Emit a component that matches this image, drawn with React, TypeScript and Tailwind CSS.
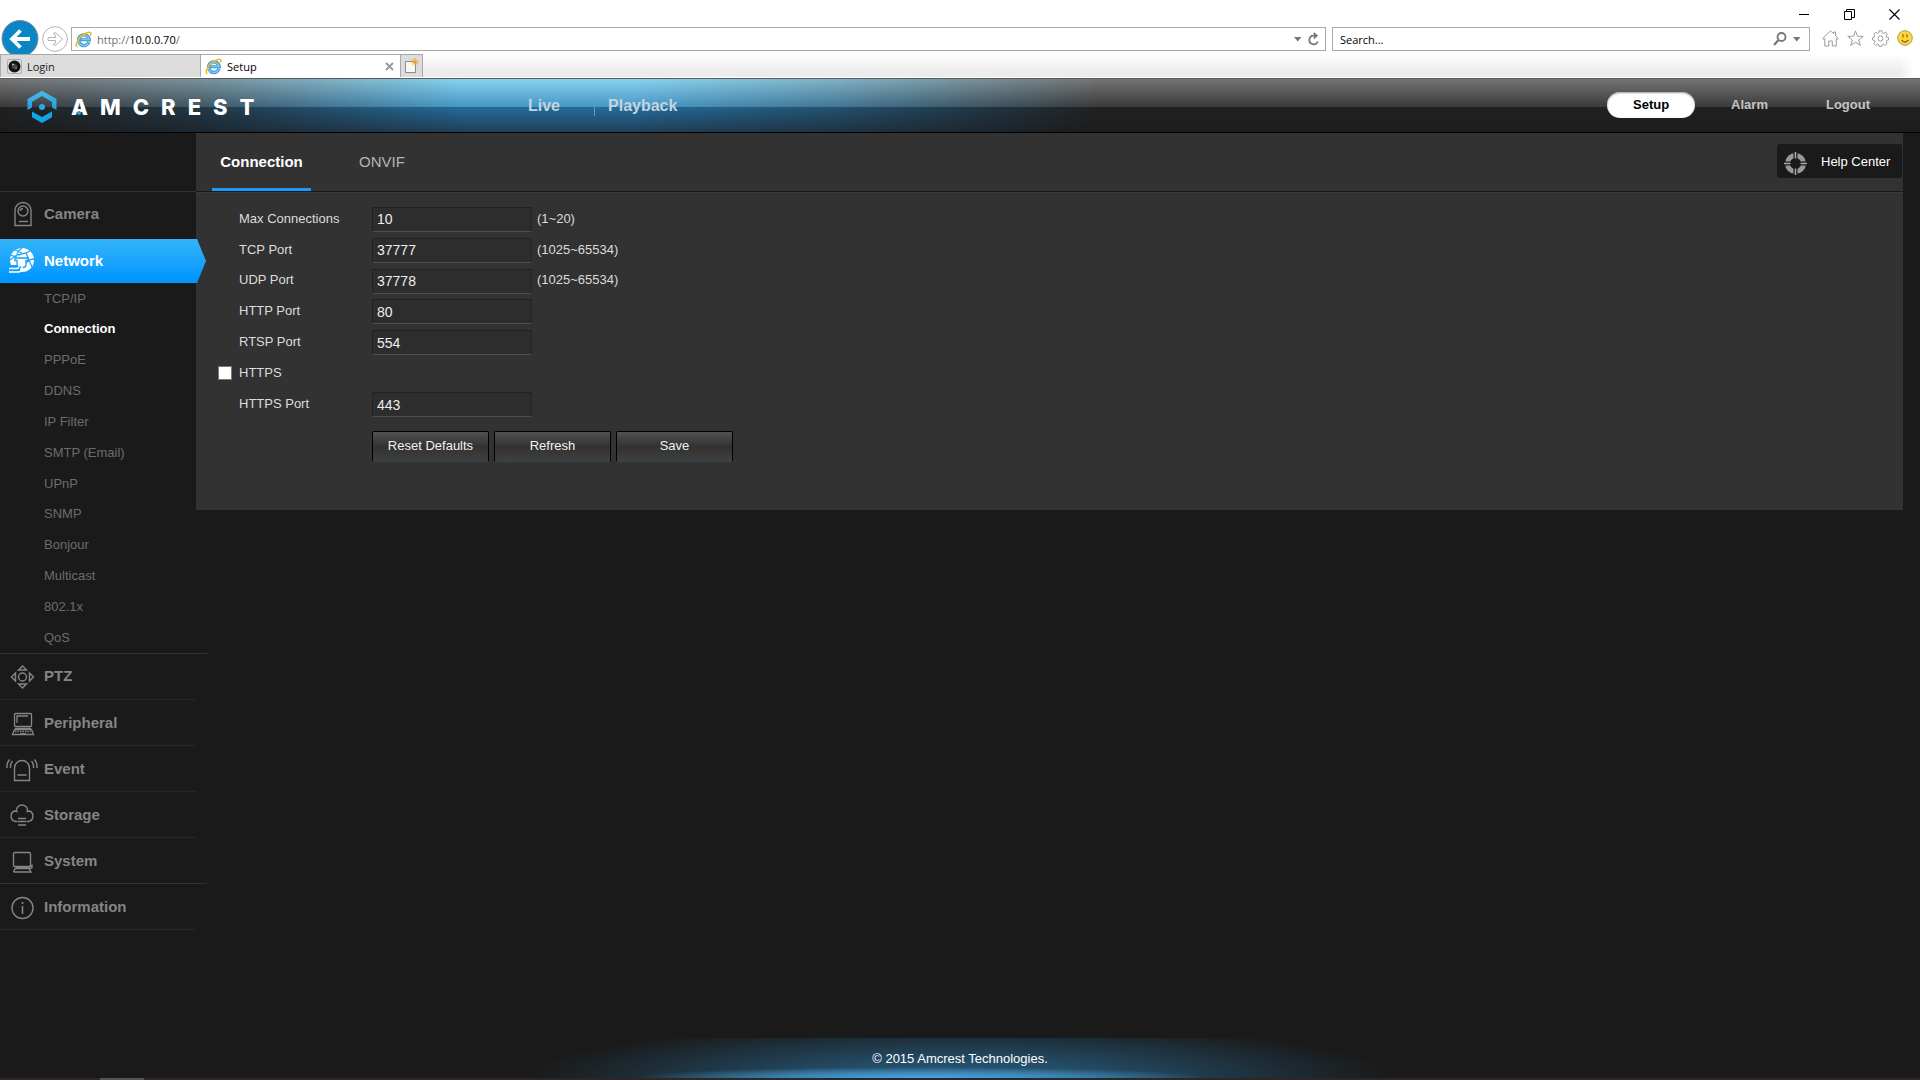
import React from "react";

const line = { fill: "none", stroke: "currentColor" } as const;

function IELogo() {
  return (
    <svg width="17" height="17" viewBox="0 0 17 17" className="shrink-0">
      <path d="M14 10.800A5.300 5.300 0 1 1 14.200 8.600H5.500" fill="none" stroke="#3a93d4" strokeWidth="3.400" />
      <path d="M13.800 11A5.300 5.300 0 1 1 14 8.400H6" fill="none" stroke="#7cc8f2" strokeWidth="1.600" />
      <path d="M2.200 15.800C-.8 13.500 4.500 5 11.500 2 15.500.4 16.800 1.600 15.300 4.600" fill="none" stroke="#f2b91d" strokeWidth="1.600" />
    </svg>
  );
}

function CameraIcon() {
  return (
    <svg width="32" height="30" viewBox="0 0 32 30" {...line} strokeWidth="1.400">
      <path d="M9 26.500V11.500a8 8 0 0 1 16 0v15Z" />
      <circle cx="17" cy="12" r="5" />
      <path d="M14.500 12a2.500 2.500 0 0 1 2.500-2.500M13 22.500h9" />
    </svg>
  );
}

function NetworkIcon() {
  return (
    <svg width="32" height="30" viewBox="0 0 32 30" fill="none" stroke="#fff">
      <circle cx="16" cy="14" r="12" fill="#fff" stroke="none" />
      <path d="M5 9q6 3 6 0t5-7M12 9l8-2 6-3M20 7l3 7 5-1M23 14l-3 3M23 14l3 7M4 14l7-5M9 4l7 3" stroke="#1ea7fb" strokeWidth="1.300" />
      <path d="M2 19h12v8H2Z" fill="#12a2fd" stroke="none" />
      <path d="M9 12h13v2.500h-2v4q0 3-3 3h-3q-3 0-3-3v-4H9Z" fill="#fff" stroke="#12a2fd" strokeWidth="1.300" />
      <path d="M16 21v1.500q0 3.500-4 3.500H3M3 22.500h8q1.500 0 1.500-1.500" strokeWidth="1.600" />
    </svg>
  );
}

function PtzIcon() {
  return (
    <svg width="32" height="30" viewBox="0 0 32 30" {...line} strokeWidth="1.400">
      <circle cx="16.500" cy="15" r="4" />
      <path d="M12.500 8 16.500 4l4 4ZM12.500 22l4 4 4-4ZM9.500 11v8l-4-4ZM23.500 11v8l4-4Z" />
    </svg>
  );
}

function PeripheralIcon() {
  return (
    <svg width="32" height="30" viewBox="0 0 32 30" {...line} strokeWidth="1.300">
      <rect x="8.500" y="4.500" width="17" height="13" rx="1" />
      <path d="M11 14V7h11M9 19.500h16M6.500 25.500l2-5h17l2 5Z" />
      <path d="M9 22.500h16" strokeDasharray="1.500 1" />
      <path d="M14 25h6" strokeWidth="1.800" />
    </svg>
  );
}

function EventIcon() {
  return (
    <svg width="32" height="30" viewBox="0 0 32 30" {...line} strokeWidth="1.400">
      <path d="M8.500 25.500V13a7.500 7.500 0 0 1 15 0v12.500ZM11.500 20h9M6.500 6q-2.500 3-2 7M3.500 4.500Q.5 8 1 13M25.500 6q2.500 3 2 7M28.500 4.500q3 3.500 2.500 8.500" />
    </svg>
  );
}

function StorageIcon() {
  return (
    <svg width="32" height="30" viewBox="0 0 32 30" {...line} strokeWidth="1.400">
      <path d="M11 20.500H9.500a5.500 5.500 0 0 1-1-10.500q2 0 3 1M10.500 9.500a5.500 5.500 0 0 1 11 0M20.500 11q1-1 3-1a5.500 5.500 0 0 1-1 10.500H21M12 17.500h8M11.500 20.500h9M12 24h8" />
    </svg>
  );
}

function SystemIcon() {
  return (
    <svg width="32" height="30" viewBox="0 0 32 30" {...line} strokeWidth="1.400">
      <rect x="7.500" y="5.500" width="17" height="14" rx="1.500" />
      <path d="M10 20.500h12l4-2v2l-2.500 1.500M7.500 25l2-4.500M7.500 25h17.500l-2-3.500H9" />
    </svg>
  );
}

function InfoIcon() {
  return (
    <svg width="32" height="30" viewBox="0 0 32 30" {...line} strokeWidth="1.400">
      <circle cx="16.500" cy="15" r="10.500" />
      <path d="M16.500 13v8M16.500 9v2" strokeWidth="1.600" />
    </svg>
  );
}

function BrowserChrome() {
  return (
    <header className="bg-white text-[11px] text-black [font-family:'Open_Sans',sans-serif]">
      <div className="flex h-[27px] items-start justify-end pt-[5px]">
        <button aria-label="Minimize" className="flex h-[18px] w-[46px] items-center justify-center">
          <svg width="10" height="10" viewBox="0 0 10 10"><path d="M0 5.500h10" stroke="#000" /></svg>
        </button>
        <button aria-label="Restore" className="flex h-[18px] w-[45px] items-center justify-center">
          <svg width="11" height="11" viewBox="0 0 11 11" fill="none" stroke="#000"><path d="M.5 2.500h7v8h-7ZM2.500 2.500v-2h8v8h-3" /></svg>
        </button>
        <button aria-label="Close" className="mr-[3px] flex h-[18px] w-[45px] items-center justify-center">
          <svg width="11" height="11" viewBox="0 0 11 11" stroke="#000" strokeWidth="1.100"><path d="m.5.5 10 10M10.500.5l-10 10" /></svg>
        </button>
      </div>

      <div className="flex h-[27px] items-start pr-[7px]">
        <button aria-label="Back" className="-mt-[7px] ml-px shrink-0">
          <svg width="38" height="34" viewBox="0 0 38 34" className="block">
            <circle cx="19" cy="18.500" r="18" fill="#0a86c6" stroke="#7d8a92" />
            <path d="M29 19H11.500M19.500 10.500 11 19l8.500 8.500" fill="none" stroke="#fff" strokeWidth="3.800" />
          </svg>
        </button>
        <button aria-label="Forward" className="-mt-px ml-[3px] shrink-0">
          <svg width="26" height="26" viewBox="0 0 26 26" fill="none" stroke="#b4b4b4" className="block">
            <circle cx="13" cy="13" r="12.400" />
            <path d="M6 11.500h7.500V10l-2-3h2.500l6.500 6-6.500 6h-2.500l2-3v-1.500H6Z" />
          </svg>
        </button>
        <div className="ml-[3px] flex h-[24px] flex-1 items-center border border-[#a9a9a9] bg-white pl-[3px]">
          <IELogo />
          <span className="ml-[5px] flex-1 pt-[2px] text-[#707070]">http://<span className="text-black">10.0.0.70</span>/</span>
          <svg width="8" height="5" viewBox="0 0 8 5"><path d="M0 0h7.500L3.750 4.500Z" fill="#777" /></svg>
          <button aria-label="Reload" className="mr-[5px] ml-[6px]">
            <svg width="12" height="14" viewBox="0 0 12 14" fill="none" stroke="#777" strokeWidth="1.700">
              <path d="M9.700 9.500A4.300 4.300 0 1 1 6 3.700h2M5.800 1l3 2.700-3 2.700" />
            </svg>
          </button>
        </div>
        <div className="ml-1.5 flex h-[24px] w-[478px] items-center border border-[#a9a9a9] bg-white">
          <input aria-label="Search" placeholder="Search..." className="min-w-0 flex-1 pt-[2px] pl-[7px] outline-none placeholder:text-black" />
          <button aria-label="Run search" className="mr-[6px]">
            <svg width="14" height="14" viewBox="0 0 14 14" fill="none" stroke="#777" strokeWidth="1.800"><circle cx="8.500" cy="5" r="4" /><path d="M5.500 8 1 13" strokeWidth="2.200" /></svg>
          </button>
          <svg width="8" height="5" viewBox="0 0 8 5" className="mr-[8px]"><path d="M0 0h7.500L3.750 4.500Z" fill="#777" /></svg>
        </div>
        <div className="ml-3 flex h-[22px] items-center gap-2">
          <button aria-label="Home">
            <svg width="17" height="17" viewBox="0 0 17 17" fill="none" stroke="#9b9b9b"><path d="m.7 8.500 7.800-7.700 3 3V2h2v3.800l2.800 2.700-1 1-1-1v7.500h-4v-5h-3.500v5h-4V8.500l-1 1Z" /></svg>
          </button>
          <button aria-label="Favorites">
            <svg width="17" height="17" viewBox="0 0 17 17" fill="none" stroke="#9b9b9b"><path d="m8.500.9 2 5.300 5.700.2-4.500 3.500 1.600 5.500-4.800-3.200-4.800 3.200 1.600-5.500L.8 6.400l5.700-.2Z" /></svg>
          </button>
          <button aria-label="Tools">
            <svg width="17" height="17" viewBox="0 0 17 17" fill="none" stroke="#9b9b9b">
              <circle cx="8.500" cy="8.500" r="2.500" />
              <path d="M7 .8h3l.3 2 1.200.6 1.800-1.200 1.900 2-1.200 1.700.6 1.300 2 .3v2.500l-2 .4-.6 1.200 1.200 1.900-2 1.900-1.700-1.200-1.200.5-.3 1.600H7l-.3-1.600-1.200-.5-1.800 1.200-2-1.900L3 11.600l-.6-1.200-1.700-.4V7.500l1.700-.3.6-1.300-1.200-1.700 1.900-2 1.800 1.200 1.200-.6Z" />
            </svg>
          </button>
          <button aria-label="Feedback">
            <svg width="16" height="16" viewBox="0 0 16 16"><circle cx="8" cy="8" r="7.300" fill="#ffd83d" stroke="#b39b4c" /><path d="M6 4v3.500M10 4v3.500M4.500 10q3.500 4 7 0" fill="none" stroke="#8d7420" strokeWidth="1.300" /></svg>
          </button>
        </div>
      </div>

      <div className="flex h-[23px]">
        <a href="#login" className="flex w-[201px] items-center border border-b-0 border-[#a9a9a9] bg-[#dcdcdc] pl-[6px] text-[#222]">
          <svg width="15" height="15" viewBox="0 0 15 15"><rect x=".5" y=".5" width="14" height="14" rx="2" fill="#ddd" stroke="#aaa" /><circle cx="7.500" cy="7.500" r="6" fill="#111" /><circle cx="7.500" cy="7.500" r="2.800" fill="#37434d" /><circle cx="9" cy="9" r="1.200" fill="#c2433b" /><circle cx="6" cy="5.500" r="1" fill="#9ecbe0" /></svg>
          <span className="ml-[5px] pt-[2px]">Login</span>
        </a>
        <div className="flex w-[199px] items-center border-t border-[#a9a9a9] bg-white pl-[4px]">
          <IELogo />
          <span className="ml-[5px] flex-1 pt-[2px]">Setup</span>
          <button aria-label="Close tab" className="mr-[6px]">
            <svg width="9" height="9" viewBox="0 0 9 9" stroke="#999" strokeWidth="1.900"><path d="m1 1 7 7M8 1 1 8" /></svg>
          </button>
        </div>
        <button aria-label="New tab" className="flex w-[23px] items-center justify-center border border-b-0 border-[#a9a9a9] bg-[#dcdcdc]">
          <svg width="15" height="17" viewBox="0 0 15 17"><path d="M1.500 3.500h10v11h-10Z" fill="#f7f7f7" stroke="#8c8c8c" /><path d="M11 0v8M7 4h8M8.500 1.500l5 5M13.500 1.500l-5 5" stroke="#f0a11e" /></svg>
        </button>
        <div className="flex-1 bg-linear-to-b from-white to-[#ececec] to-80% [mask-image:linear-gradient(to_left,transparent_6px,black_20px)]" />
      </div>
      <div className="h-px bg-white" />
    </header>
  );
}

function Logo() {
  return (
    <a href="#home" aria-label="AMCREST" className="flex items-center pt-[2px] text-white">
      <svg width="30" height="34" viewBox="0 0 30 34">
        <defs>
          <linearGradient id="logoBlue" x1="0" y1="0" x2="0" y2="1"><stop offset="0" stopColor="#4fb9e6" /><stop offset="1" stopColor="#1d9fdc" /></linearGradient>
        </defs>
        <path d="M.5 20V9L15 .8 29.500 9v11l-4.500-2.500V12L15 6 5 12v5.500Z" fill="url(#logoBlue)" />
        <path d="M5 21.500 15 27l10-5.500v5.800L15 33 5 27.300Z" fill="#0fa5e6" />
        <circle cx="15" cy="17" r="3" fill="#28a9e2" />
      </svg>
      <span className="ml-[14px] flex gap-[12px] text-[22px] leading-6 font-extrabold [font-family:Inter,sans-serif]">
        <span className="relative">
          A<span className="absolute bottom-[4px] left-1/2 size-[4px] -translate-x-1/2 rounded-full bg-[#1fa5e2]" />
        </span>
        <span>M</span><span>C</span><span>R</span><span>E</span><span>S</span><span>T</span>
      </span>
    </a>
  );
}

function TopBar() {
  return (
    <div className="relative isolate flex h-[55px] items-center border-t border-b border-t-[#5a5a5a] border-b-black bg-[linear-gradient(to_bottom,#747474_0,#3a3a3a_28px,#212121_28px,#1c1c1c_100%)] pl-[27px] font-bold text-[#c4c4c4]">
      <div className="absolute inset-y-0 left-0 -z-10 w-[1100px] bg-[linear-gradient(to_bottom,#87d2ef_0,#4796c4_28px,#246c9b_28px,#203f58_100%)] [mask-image:linear-gradient(to_right,transparent_0,rgba(0,0,0,0.3)_18%,black_42%,black_58%,rgba(0,0,0,0.65)_76%,transparent_100%)]" />
      <div className="w-[501px]"><Logo /></div>
      <nav className="flex flex-1 items-center text-[16px] text-[#c3d5df]">
        <a href="#live">Live</a>
        <span className="mr-[13px] ml-[34px] h-[20px] w-px bg-[#5c9dc2]" />
        <a href="#playback">Playback</a>
      </nav>
      <nav className="mr-[50px] flex items-center pb-[2px] text-[13px]">
        <a href="#setup" className="flex h-[26px] w-[88px] items-center justify-center rounded-full bg-white pt-px text-black shadow-[inset_0_1px_2px_#999]">Setup</a>
        <a href="#alarm" className="ml-[36px] pt-px">Alarm</a>
        <a href="#logout" className="ml-[58px] pt-px">Logout</a>
      </nav>
    </div>
  );
}

const subItems = ["TCP/IP", "Connection", "PPPoE", "DDNS", "IP Filter", "SMTP (Email)", "UPnP", "SNMP", "Bonjour", "Multicast", "802.1x", "QoS"];

const lowerItems = [
  { name: "PTZ", Icon: PtzIcon },
  { name: "Peripheral", Icon: PeripheralIcon },
  { name: "Event", Icon: EventIcon },
  { name: "Storage", Icon: StorageIcon },
  { name: "System", Icon: SystemIcon },
  { name: "Information", Icon: InfoIcon },
];

function Sidebar() {
  return (
    <aside className="w-[196px] shrink-0 pt-[58px] text-[15px] font-bold text-[#858585]">
      <a href="#camera" className="flex h-[48px] items-center border-t border-[#333] pb-[3px] pl-[6px]">
        <CameraIcon />
        <span className="ml-[6px]">Camera</span>
      </a>
      <a href="#network" className="relative flex h-[44px] w-[206px] items-center bg-linear-to-b from-[#33b5f8] to-[#0098ff] to-85% pl-[6px] text-white [clip-path:polygon(0_0,197px_0,100%_50%,197px_100%,0_100%)]">
        <NetworkIcon />
        <span className="ml-[6px]">Network</span>
      </a>
      <ul className="grid h-[370px] auto-rows-fr text-[13px] font-normal text-[#6c6c6c]">
        {subItems.map((s) => (
          <li key={s} className="flex items-center pl-[44px]">
            <a href={"#" + s} className={s === "Connection" ? "font-bold text-white" : ""}>{s}</a>
          </li>
        ))}
      </ul>
      {lowerItems.map(({ name, Icon }) => (
        <a
          key={name}
          href={"#" + name}
          className={
            name === "PTZ"
              ? "flex h-[46px] w-[207px] items-center border-t border-[#333] pl-[6px]"
              : name === "Information"
                ? "flex h-[46px] w-[207px] items-center border-t border-[#333] pt-[2px] pl-[6px]"
                : "flex h-[46px] items-center border-t border-[#272727] pt-[2px] pl-[6px]"
          }
        >
          <Icon />
          <span className="ml-[6px]">{name}</span>
        </a>
      ))}
      <div className="h-px bg-[#272727]" />
    </aside>
  );
}

const fieldStyle =
  "h-[25px] w-[160px] border border-t-[#222] border-r-[#252525] border-b-[#4b4f51] border-l-[#222] bg-[#2d2d2d] pl-[4px] text-sm text-[#eee] outline-none";

function Field({ id, label, value, hint }: { id: string; label: string; value: string; hint?: string }) {
  return (
    <div className="flex items-center">
      <label htmlFor={id} className="w-[133px] pb-[2px]">{label}</label>
      <input id={id} defaultValue={value} className={fieldStyle} />
      {hint && <span className="ml-[5px] pb-[2px]">{hint}</span>}
    </div>
  );
}

const buttonStyle =
  "h-[31px] w-[117px] rounded-[2px] border border-black border-b-[#2c4752] bg-linear-to-b from-[#525252] via-[#323232] to-[#404040] pb-[2px] text-[#f2f2f2]";

function MainPanel() {
  return (
    <main className="mr-[17px] flex-1 bg-[#323232] pb-[48px] text-[13px] text-[#dcdcdc]">
      <div className="flex h-[59px] items-start border-b border-[#181818] pl-[16px]">
        <button className="h-[58px] w-[99px] border-b-3 border-[#1c9bfb] pt-[3px] text-[15px] font-bold text-white">Connection</button>
        <button className="ml-[36px] h-[58px] w-[70px] border-b-3 border-transparent pt-[3px] text-[15px] text-[#b5b5b5]">ONVIF</button>
        <button className="mt-[11px] mr-px ml-auto flex h-[34px] w-[125px] items-center rounded-[3px] bg-[#1a1a1a] pl-[7px] text-white">
          <svg width="23" height="27" viewBox="0 -4 23 27">
            <circle cx="11.500" cy="11.500" r="8" fill="none" stroke="#999" strokeWidth="5" />
            <path d="M11.500 0v8M11.500 15v8M0 11.500h8M15 11.500h8" stroke="#1a1a1a" strokeWidth="4" />
            <path d="M11.500 0v6.500M11.500 16.500V23M0 11.500h6.500M16.500 11.500H23" stroke="#aaa" strokeWidth="1.500" />
          </svg>
          <span className="ml-[14px] pt-px">Help Center</span>
        </button>
      </div>
      <form className="border-t border-[#3a3a3a] pt-[11px] pl-[43px]" onSubmit={(e) => e.preventDefault()}>
        <div className="grid h-[216px] auto-rows-fr">
          <Field id="max" label="Max Connections" value="10" hint="(1~20)" />
          <Field id="tcp" label="TCP Port" value="37777" hint="(1025~65534)" />
          <Field id="udp" label="UDP Port" value="37778" hint="(1025~65534)" />
          <Field id="http" label="HTTP Port" value="80" />
          <Field id="rtsp" label="RTSP Port" value="554" />
          <div className="-ml-[21px] flex items-center pb-[2px]">
            <input id="https" type="checkbox" className="size-[14px] appearance-none border border-[#777] bg-white checked:bg-[#1c9bfb]" />
            <label htmlFor="https" className="ml-[7px]">HTTPS</label>
          </div>
          <Field id="httpsport" label="HTTPS Port" value="443" />
        </div>
        <div className="mt-[11px] ml-[133px] flex gap-[5px]">
          <button type="button" className={buttonStyle}>Reset Defaults</button>
          <button type="button" className={buttonStyle}>Refresh</button>
          <button type="submit" className={buttonStyle}>Save</button>
        </div>
      </form>
    </main>
  );
}

export default function App() {
  return (
    <div className="flex min-h-screen flex-col bg-[#1a1a1a] [font-family:'Liberation_Sans',Arial,sans-serif]">
      <BrowserChrome />
      <TopBar />
      <div className="flex flex-1 items-start">
        <Sidebar />
        <MainPanel />
      </div>
      <footer className="flex h-[40px] items-center justify-center bg-[radial-gradient(ellipse_290px_11px_at_48%_100%,#4aa5e0_0,#4aa5e099_50%,transparent_100%),radial-gradient(ellipse_430px_56px_at_50%_100%,#275a7a_0,#234a63_35%,transparent_100%)] pt-px text-[13px] text-white">
        © 2015 Amcrest Technologies.
      </footer>
      <div className="h-[2px] bg-[#2b2727] pl-[100px]">
        <div className="h-full w-[44px] bg-[#555]" />
      </div>
    </div>
  );
}
